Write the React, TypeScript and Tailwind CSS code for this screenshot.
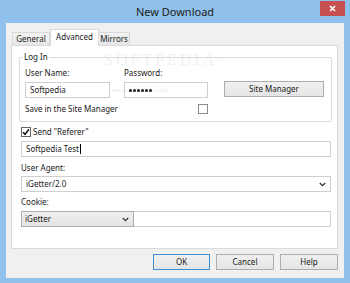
import React from "react";

function Chevron() {
  return (
    <svg width="7" height="5" viewBox="0 0 7 5">
      <path d="M0.8 1 L3.5 3.6 L6.2 1" fill="none" stroke="#333" strokeWidth="1.3" />
    </svg>
  );
}

function Btn({ label, def }: { label: string; def?: boolean }) {
  return (
    <div
      className={
        "h-[16px] flex items-center justify-center border bg-linear-to-b from-[#f0f0f0] to-[#e5e5e5] " +
        (def ? "w-[57px] border-[#3c8fd6]" : "w-[58px] border-[#adadad]")
      }
    >
      {label}
    </div>
  );
}

export default function App() {
  return (
    <div className="w-[350px] h-[283px] bg-[#90c1ec] flex flex-col font-['Noto_Sans',sans-serif] text-[8px] leading-[12px] text-[#1a1a1a] overflow-hidden">
      {/* title bar */}
      <div className="h-[23px] shrink-0 grid grid-cols-[30px_1fr_30px] items-start">
        <div />
        <div className="text-center text-[11px] leading-[14px] pt-[5px] text-[#202020]">New Download</div>
        <div className="mt-[1px] w-[25px] h-[15px] bg-[#c75050] flex items-center justify-center">
          <svg width="7" height="7" viewBox="0 0 7 7">
            <path d="M1 1L6 6M6 1L1 6" stroke="white" strokeWidth="1.6" />
          </svg>
        </div>
      </div>

      {/* client */}
      <div className="mx-[6px] mb-[5px] flex-1 bg-[#f0f0f0] flex flex-col pt-[6px]">
        {/* tabs */}
        <div className="flex items-end h-[16px] pl-[6px]">
          <div className="w-[38px] h-[13px] flex items-center justify-center border border-b-0 border-[#d9d9d9] bg-linear-to-b from-[#f3f3f3] to-[#e6e6e6]">
            General
          </div>
          <div className="relative z-10 w-[49px] h-[17px] -mb-px flex items-center justify-center border border-b-0 border-[#d9d9d9] bg-white pb-[2px]">
            Advanced
          </div>
          <div className="w-[31px] h-[13px] flex items-center justify-center border border-b-0 border-l-0 border-[#d9d9d9] bg-linear-to-b from-[#f3f3f3] to-[#e6e6e6]">
            Mirrors
          </div>
        </div>

        {/* panel */}
        <div className="relative ml-[5px] w-[327px] h-[204px] shrink-0 border border-[#d9d9d9] bg-white flex flex-col pt-[5px]">
          {/* watermark */}
          <div className="absolute left-[92px] top-[6px] text-[16px] leading-[16px] tracking-[3px] text-[#f1f1f1] font-['Liberation_Serif',serif] pointer-events-none">
            SOFTPEDIA<span className="text-[6px] align-top">™</span>
          </div>
          <div className="absolute left-[100px] top-[40px] text-[6px] leading-[8px] text-[#ececec] pointer-events-none">
            www.softpedia.com
          </div>

          <fieldset className="relative ml-[7px] w-[313px] border border-[#dcdcdc] rounded-[2px] px-[5px] pb-[6px] m-0">
            <legend className="-ml-[2px] px-[1px] leading-[12px]">Log In</legend>
            <div className="mt-[4px] h-[12px] flex">
              <div className="w-[85px]">User Name:</div>
              <div className="ml-[14px] w-[84px]">Password:</div>
            </div>
            <div className="mt-[3px] h-[16px] flex items-start">
              <div className="w-[85px] h-[16px] border border-[#cfcfcf] pl-[4px] flex items-center">Softpedia</div>
              <div className="ml-[14px] w-[84px] h-[16px] border border-[#cfcfcf] pl-[4px] flex items-center gap-[1px]">
                {[0, 1, 2, 3, 4, 5].map((i) => (
                  <span key={i} className="w-[3px] h-[3px] rounded-full bg-[#222]" />
                ))}
              </div>
              <div className="ml-[16px] -mt-px w-[100px] h-[16px] border border-[#adadad] bg-linear-to-b from-[#f0f0f0] to-[#e5e5e5] flex items-center justify-center">
                Site Manager
              </div>
            </div>
            <div className="mt-[5px] h-[12px] w-[183px] flex items-center justify-between">
              <span>Save in the Site Manager</span>
              <span className="w-[10px] h-[10px] border border-[#8a8a8a] bg-white" />
            </div>
          </fieldset>

          <div className="mt-[4px] ml-[9px] h-[12px] flex items-center gap-[2px]">
            <span className="w-[10px] h-[10px] border border-[#666] bg-white flex items-center justify-center">
              <svg width="8" height="8" viewBox="0 0 8 8">
                <path d="M1 4.2 L3 6.3 L7 1.3" fill="none" stroke="#111" strokeWidth="1.5" />
              </svg>
            </span>
            <span>Send "Referer"</span>
          </div>
          <div className="mt-[3px] ml-[9px] w-[310px] h-[16px] border border-[#cfcfcf] pl-[4px] flex items-center">
            Softpedia Test<span className="ml-[1px] w-px h-[10px] bg-black" />
          </div>

          <div className="mt-[5px] ml-[9px] h-[12px]">User Agent:</div>
          <div className="mt-[2px] ml-[9px] w-[310px] h-[16px] border border-[#cfcfcf] pl-[4px] pr-[4px] flex items-center justify-between">
            <span>iGetter/2.0</span>
            <Chevron />
          </div>

          <div className="mt-[4px] ml-[9px] h-[12px]">Cookie:</div>
          <div className="mt-[3px] ml-[9px] w-[310px] h-[16px] flex">
            <div className="w-[113px] h-[16px] border border-[#adadad] bg-linear-to-b from-[#efefef] to-[#e3e3e3] pl-[3px] pr-[4px] flex items-center justify-between">
              <span>iGetter</span>
              <Chevron />
            </div>
            <div className="flex-1 h-[16px] border border-l-0 border-[#cfcfcf] bg-white" />
          </div>
        </div>

        {/* buttons */}
        <div className="mt-[5px] flex justify-end gap-[6px] pr-[6px]">
          <Btn label="OK" def />
          <Btn label="Cancel" />
          <Btn label="Help" />
        </div>
      </div>
    </div>
  );
}
